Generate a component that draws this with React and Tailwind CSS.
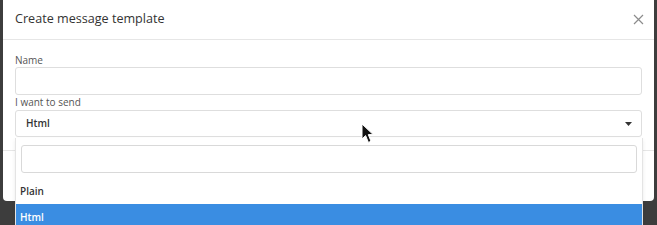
import React from 'react';

const font = { fontFamily: '"Open Sans", "Liberation Sans", sans-serif' };

const Cursor = () => (
    <svg className="absolute left-[361px] top-[123px]" width="16" height="22" viewBox="0 0 16 22">
        <path d="M1 1 L1 16 L4.6 12.6 L7.4 19.4 L10 18.3 L7.3 11.6 L12.2 11.6 Z" fill="#111" stroke="#fff" strokeWidth="1" />
    </svg>
);

const App = () => {
    return (
        <div className="relative w-[657px] h-[225px] overflow-hidden bg-[#3d3d3d]" style={font}>
            {/* Modal */}
            <div className="relative mx-[3px] -mt-[4px] w-[651px] bg-white rounded-[4px] overflow-visible">
                {/* Header */}
                <div className="flex items-center justify-between h-[44px] pt-[4px] pl-[12px] pr-[10px] border-b border-[#e6e6e6]">
                    <h2 className="text-[12.6px] text-[#333]">Create message template</h2>
                    <svg width="11" height="11" viewBox="0 0 11 11">
                        <path d="M1 1 L10 10 M10 1 L1 10" stroke="#8c8c8c" strokeWidth="1.2" />
                    </svg>
                </div>

                {/* Body */}
                <div className="px-[12px] pt-[13px] pb-[13px] border-b border-[#e6e6e6]">
                    <label className="block text-[10px] leading-[14px] text-[#555]">Name</label>
                    <div className="h-[28px] border border-[#dedede] rounded-[3px]"></div>
                    <label className="block text-[10px] leading-[15px] text-[#555]">I want to send</label>
                    <div className="flex items-center justify-between h-[27px] border border-[#dedede] rounded-[3px] pl-[10px] pr-[9px]">
                        <span className="text-[10px] font-semibold text-[#333]">Html</span>
                        <svg width="7" height="4" viewBox="0 0 7 4">
                            <path d="M0 0 L7 0 L3.5 4 Z" fill="#333" />
                        </svg>
                    </div>
                </div>

                {/* Footer */}
                <div className="h-[50px] rounded-b-[4px]"></div>

                {/* Dropdown */}
                <div className="absolute left-[12px] right-[11px] top-[142px] bg-white border-x border-[#e4e4e4] shadow-[0_2px_4px_rgba(0,0,0,0.08)]">
                    <div className="px-[5px] pt-[7px] pb-[5px]">
                        <div className="h-[28px] border border-[#d9d9d9] rounded-[3px]"></div>
                    </div>
                    <div className="h-[26px] flex items-center px-[4px] text-[10px] font-semibold text-[#333]">Plain</div>
                    <div className="h-[26px] flex items-center px-[4px] text-[10px] font-semibold text-white bg-[#3a8de2]">Html</div>
                </div>
            </div>

            <Cursor />
        </div>
    );
};

export default App;
